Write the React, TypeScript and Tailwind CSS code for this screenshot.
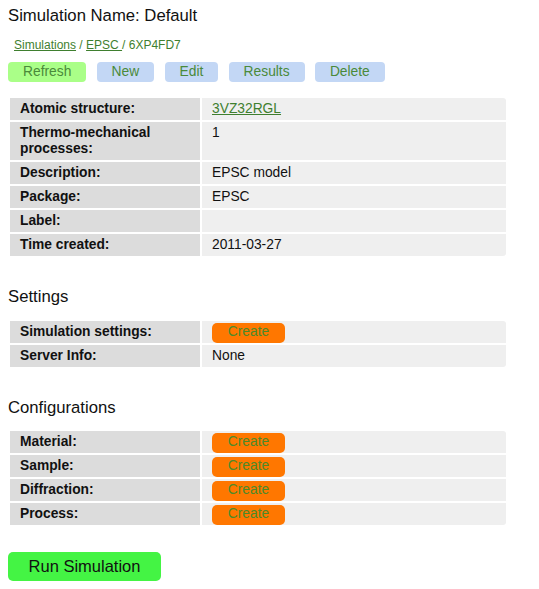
import React from "react";

type Row = { label: string; value?: React.ReactNode; create?: boolean };

const linkCls = "text-[#3f7f2f] underline";

function CreateButton() {
  return (
    <button className="block h-[20px] w-[73px] rounded-[5px] bg-[#ff7700] pb-[3px] text-[13.8px] leading-[17px] text-[#4a8a2a]">
      Create
    </button>
  );
}

function InfoTable({ rows }: { rows: Row[] }) {
  return (
    <table className="w-[500px] border-separate border-spacing-[2px] text-[13.8px] leading-[16px] text-[#111]">
      <tbody>
        {rows.map((r, i) => {
          const first = i === 0;
          const last = i === rows.length - 1;
          return (
            <tr key={r.label}>
              <td className="w-[190px] bg-[#dcdcdc] px-[10px] py-[3px] align-top font-bold">{r.label}</td>
              <td
                className={
                  "bg-[#efefef] px-[10px] align-top " +
                  (r.create ? "pt-[2px] pb-0 " : "py-[3px] ") +
                  (first ? "rounded-tr-[3px] " : "") +
                  (last ? "rounded-br-[3px]" : "")
                }
              >
                {r.create ? <CreateButton /> : r.value}
                {!r.create && r.value === "" ? <span>&nbsp;</span> : null}
              </td>
            </tr>
          );
        })}
      </tbody>
    </table>
  );
}

export default function App() {
  const tools = [
    { text: "Refresh", bg: "bg-[#aaff88]" },
    { text: "New", bg: "bg-[#c3d7f5]" },
    { text: "Edit", bg: "bg-[#c3d7f5]" },
    { text: "Results", bg: "bg-[#c3d7f5]" },
    { text: "Delete", bg: "bg-[#c3d7f5]" },
  ];

  return (
    <div className="bg-white px-[8px] pb-[8px] font-['Liberation_Sans',Arial,sans-serif] text-[#111]">
      <h1 className="pt-[6px] text-[16.7px] leading-[20px] font-normal">Simulation Name: Default</h1>

      <div className="mt-[12px] pl-[6px] text-[12px] leading-[14px] text-[#3f7f2f]">
        <span className="underline">Simulations</span> / <span className="underline">EPSC </span>/ 6XP4FD7
      </div>

      <div className="mt-[10px] flex gap-[10.3px]">
        {tools.map((t) => (
          <button
            key={t.text}
            className={"h-[20px] rounded-[4px] px-[15px] pb-[1px] text-[13.8px] leading-[19px] text-[#4a8a3a] " + t.bg}
          >
            {t.text}
          </button>
        ))}
      </div>

      <div className="mt-[14px]">
        <InfoTable
          rows={[
            { label: "Atomic structure:", value: <span className={linkCls}>3VZ32RGL</span> },
            { label: "Thermo-mechanical processes:", value: "1" },
            { label: "Description:", value: "EPSC model" },
            { label: "Package:", value: "EPSC" },
            { label: "Label:", value: "" },
            { label: "Time created:", value: "2011-03-27" },
          ]}
        />
      </div>

      <h2 className="mt-[29px] text-[16.7px] leading-[20px] font-normal">Settings</h2>
      <div className="mt-[12px]">
        <InfoTable
          rows={[
            { label: "Simulation settings:", create: true },
            { label: "Server Info:", value: "None" },
          ]}
        />
      </div>

      <h2 className="mt-[29px] text-[16.7px] leading-[20px] font-normal">Configurations</h2>
      <div className="mt-[11px]">
        <InfoTable
          rows={[
            { label: "Material:", create: true },
            { label: "Sample:", create: true },
            { label: "Diffraction:", create: true },
            { label: "Process:", create: true },
          ]}
        />
      </div>

      <button className="mt-[25px] h-[29px] w-[153px] rounded-[5px] bg-[#44f444] text-[16.5px] leading-[29px] text-[#111]">
        Run Simulation
      </button>
    </div>
  );
}
